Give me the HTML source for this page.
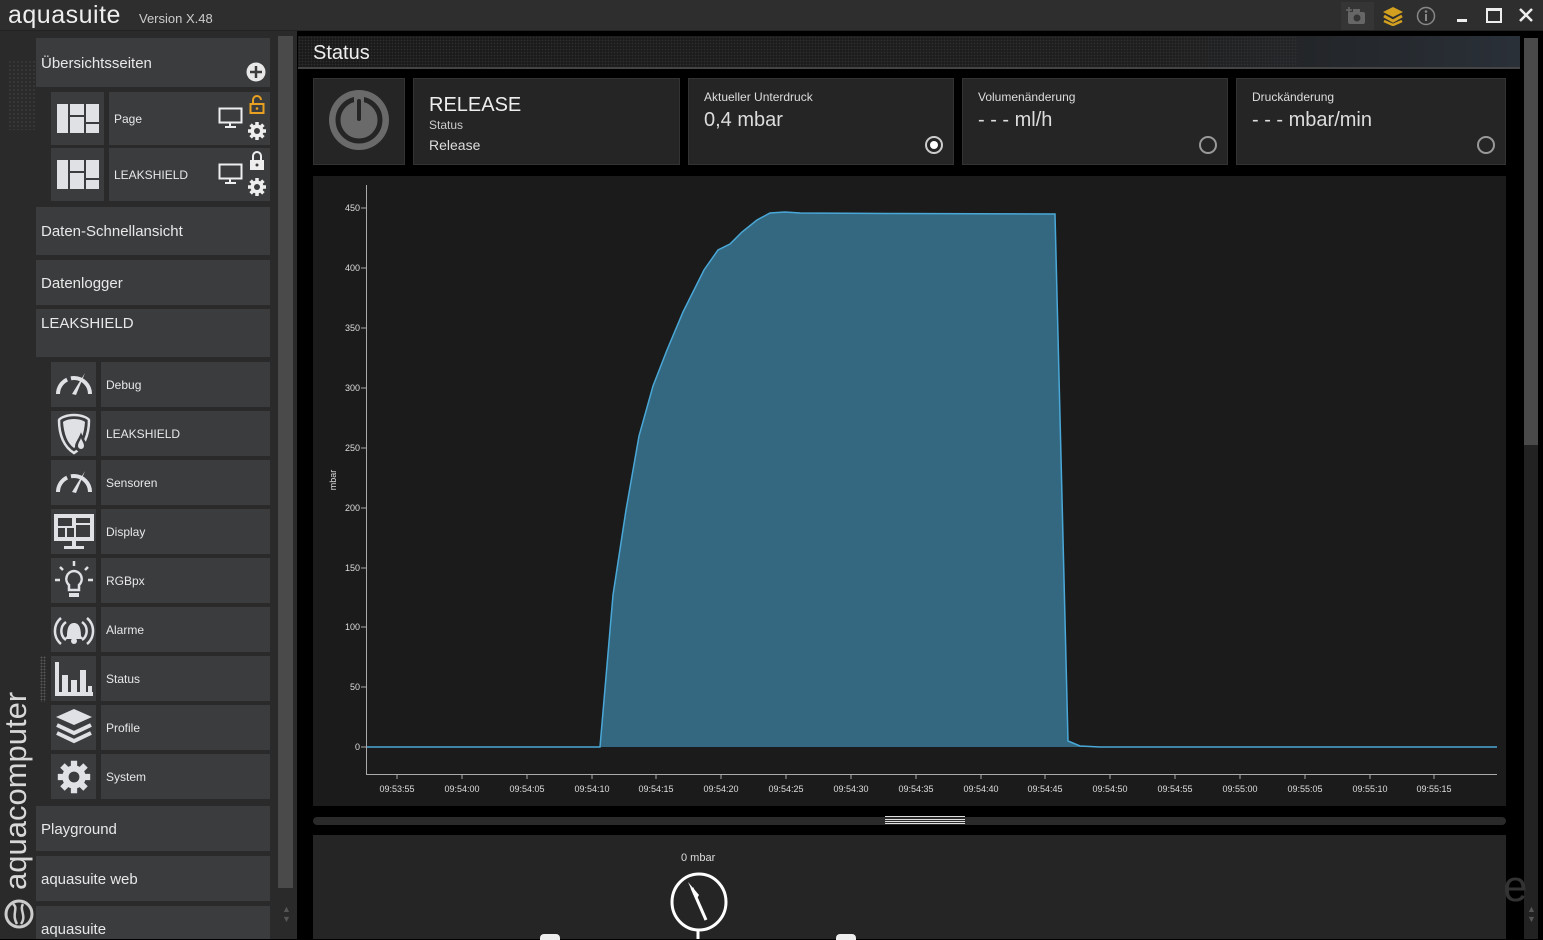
<!DOCTYPE html>
<html><head><meta charset="utf-8"><style>
*{margin:0;padding:0;box-sizing:border-box}
body{width:1543px;height:939px;overflow:hidden;background:#000;font-family:"Liberation Sans",sans-serif;color:#e6e6e6;position:relative}
.a{position:absolute}
.it{position:absolute;background:#3b3c3e}
.lbl{font-size:12px;color:#e8e8e8}
.big{font-size:15px;color:#e8e8e8}
.card{position:absolute;top:78px;height:87px;background:#252525;border:1px solid #333}
.dot{position:absolute;width:18px;height:18px;border-radius:50%;border:2px solid #999;}
</style></head><body>
<div class="a" style="left:0;top:0;width:1543px;height:31px;background:#2e2e2f;border-bottom:1px solid #222"></div>
<div class="a" style="left:8px;top:1px;font-size:25px;color:#eee;letter-spacing:0.5px">aquasuite</div>
<div class="a" style="left:139px;top:11px;font-size:13px;color:#ccc">Version X.48</div>
<div class="a" style="left:1341px;top:2px;width:33px;height:28px;background:#353535"></div>
<svg class="a" style="left:1346px;top:6px" width="22" height="20"><rect x="2" y="6" width="17" height="12" rx="2" fill="#666"/><circle cx="11" cy="12" r="3.5" fill="#353535"/><rect x="7" y="3" width="7" height="4" fill="#666"/><path d="M3 1v6M0 4h6" stroke="#666" stroke-width="1.5"/></svg>
<svg class="a" style="left:1382px;top:6px" width="22" height="20"><path d="M11 1L21 6L11 11L1 6Z" fill="#d4a020"/><path d="M2 10L11 15L20 10" stroke="#d4a020" stroke-width="3" fill="none"/><path d="M2 15L11 19L20 15" stroke="#d4a020" stroke-width="2.5" fill="none"/></svg>
<svg class="a" style="left:1416px;top:6px" width="20" height="20"><circle cx="10" cy="10" r="8.5" stroke="#888" stroke-width="1.5" fill="none"/><circle cx="10" cy="5.5" r="1.3" fill="#888"/><rect x="9" y="8" width="2" height="7" fill="#888"/></svg>
<div class="a" style="left:1457px;top:19px;width:10px;height:3px;background:#eee"></div>
<div class="a" style="left:1486px;top:8px;width:16px;height:15px;border:2px solid #eee;border-top-width:3px"></div>
<svg class="a" style="left:1518px;top:7px" width="16" height="16"><path d="M2 2L14 14M14 2L2 14" stroke="#eee" stroke-width="2.5"/></svg>
<div class="a" style="left:0;top:31px;width:297px;height:908px;background:#2a2a2b"></div>
<div class="a" style="left:278px;top:36px;width:15px;height:852px;background:#4a4a4b"></div>
<div class="a" style="left:282px;top:904px;font-size:9px;color:#555;line-height:10px">▲<br>▼</div>
<div class="it" style="left:36px;top:38px;width:234px;height:49px"></div>
<div class="a big" style="left:41px;top:55px">Übersichtsseiten</div>
<svg class="a" style="left:246px;top:62px" width="20" height="20"><circle cx="10" cy="10" r="9.5" fill="#e8e8e8"/><path d="M10 4v12M4 10h12" stroke="#3b3c3e" stroke-width="2.5"/></svg>
<div class="it" style="left:51px;top:92px;width:53px;height:53px"></div>
<div class="it" style="left:109px;top:92px;width:161px;height:53px"></div>
<div class="it" style="left:51px;top:148px;width:53px;height:53px"></div>
<div class="it" style="left:109px;top:148px;width:161px;height:53px"></div>
<svg class="a" style="left:57px;top:104px" width="42" height="30"><rect x="0" y="0" width="11" height="29" fill="#dfe1e5"/><rect x="13" y="0" width="14" height="11" fill="#dfe1e5"/><rect x="13" y="13" width="14" height="16" fill="#dfe1e5"/><rect x="29" y="0" width="13" height="18" fill="#dfe1e5"/><rect x="29" y="20" width="13" height="9" fill="#dfe1e5"/></svg>
<svg class="a" style="left:57px;top:160px" width="42" height="30"><rect x="0" y="0" width="11" height="29" fill="#dfe1e5"/><rect x="13" y="0" width="14" height="11" fill="#dfe1e5"/><rect x="13" y="13" width="14" height="16" fill="#dfe1e5"/><rect x="29" y="0" width="13" height="18" fill="#dfe1e5"/><rect x="29" y="20" width="13" height="9" fill="#dfe1e5"/></svg>
<div class="a lbl" style="left:114px;top:112px">Page</div>
<div class="a lbl" style="left:114px;top:168px">LEAKSHIELD</div>
<svg class="a" style="left:218px;top:107px" width="26" height="22"><rect x="1.5" y="1.5" width="22" height="14" fill="none" stroke="#eee" stroke-width="2"/><path d="M12 16v3M7 20h11" stroke="#eee" stroke-width="2"/></svg>
<svg class="a" style="left:218px;top:163px" width="26" height="22"><rect x="1.5" y="1.5" width="22" height="14" fill="none" stroke="#eee" stroke-width="2"/><path d="M12 16v3M7 20h11" stroke="#eee" stroke-width="2"/></svg>
<svg class="a" style="left:249px;top:95px" width="16" height="20"><path d="M4 9V5a4 4 0 0 1 8 0" stroke="#e8a020" stroke-width="2" fill="none"/><rect x="1.5" y="9" width="13" height="9" fill="none" stroke="#e8a020" stroke-width="2"/><circle cx="8" cy="13.5" r="1.3" fill="#e8a020"/></svg>
<svg class="a" style="left:249px;top:151px" width="16" height="20"><path d="M4 9V5a4 4 0 0 1 8 0v4" stroke="#eee" stroke-width="2" fill="none"/><rect x="1" y="9" width="14" height="10" fill="#eee"/><circle cx="8" cy="14" r="1.5" fill="#3b3c3e"/></svg>
<svg class="a" style="left:247px;top:121px" width="20" height="20" viewBox="0 0 20 20"><g fill="#eee"><circle cx="10" cy="10" r="6.5"/><g stroke="#eee" stroke-width="3.5"><path d="M10 1v18M1 10h18M3.6 3.6l12.8 12.8M16.4 3.6L3.6 16.4"/></g></g><circle cx="10" cy="10" r="3" fill="#3b3c3e"/></svg>
<svg class="a" style="left:247px;top:177px" width="20" height="20" viewBox="0 0 20 20"><g fill="#eee"><circle cx="10" cy="10" r="6.5"/><g stroke="#eee" stroke-width="3.5"><path d="M10 1v18M1 10h18M3.6 3.6l12.8 12.8M16.4 3.6L3.6 16.4"/></g></g><circle cx="10" cy="10" r="3" fill="#3b3c3e"/></svg>
<div class="it" style="left:36px;top:207px;width:234px;height:48px"></div>
<div class="a big" style="left:41px;top:223px">Daten-Schnellansicht</div>
<div class="it" style="left:36px;top:260px;width:234px;height:45px"></div>
<div class="a big" style="left:41px;top:275px">Datenlogger</div>
<div class="it" style="left:36px;top:309px;width:234px;height:48px"></div>
<div class="a big" style="left:41px;top:315px">LEAKSHIELD</div>
<div class="it" style="left:51px;top:362px;width:45px;height:45px"></div><div class="it" style="left:101px;top:362px;width:169px;height:45px"></div><div class="a lbl" style="left:106px;top:378px">Debug</div>
<div class="it" style="left:51px;top:411px;width:45px;height:45px"></div><div class="it" style="left:101px;top:411px;width:169px;height:45px"></div><div class="a lbl" style="left:106px;top:427px">LEAKSHIELD</div>
<div class="it" style="left:51px;top:460px;width:45px;height:45px"></div><div class="it" style="left:101px;top:460px;width:169px;height:45px"></div><div class="a lbl" style="left:106px;top:476px">Sensoren</div>
<div class="it" style="left:51px;top:509px;width:45px;height:45px"></div><div class="it" style="left:101px;top:509px;width:169px;height:45px"></div><div class="a lbl" style="left:106px;top:525px">Display</div>
<div class="it" style="left:51px;top:558px;width:45px;height:45px"></div><div class="it" style="left:101px;top:558px;width:169px;height:45px"></div><div class="a lbl" style="left:106px;top:574px">RGBpx</div>
<div class="it" style="left:51px;top:607px;width:45px;height:45px"></div><div class="it" style="left:101px;top:607px;width:169px;height:45px"></div><div class="a lbl" style="left:106px;top:623px">Alarme</div>
<div class="it" style="left:51px;top:656px;width:45px;height:45px"></div><div class="it" style="left:101px;top:656px;width:169px;height:45px"></div><div class="a lbl" style="left:106px;top:672px">Status</div>
<div class="it" style="left:51px;top:705px;width:45px;height:45px"></div><div class="it" style="left:101px;top:705px;width:169px;height:45px"></div><div class="a lbl" style="left:106px;top:721px">Profile</div>
<div class="it" style="left:51px;top:754px;width:45px;height:45px"></div><div class="it" style="left:101px;top:754px;width:169px;height:45px"></div><div class="a lbl" style="left:106px;top:770px">System</div>
<svg class="a" style="left:54px;top:370px" width="40" height="28"><path d="M4 24A16 16 0 0 1 36 24" stroke="#dfe1e5" stroke-width="4" fill="none" stroke-dasharray="18 4 40"/><path d="M18 24L31 3L22 25Z" fill="#dfe1e5"/></svg>
<svg class="a" style="left:54px;top:468px" width="40" height="28"><path d="M4 24A16 16 0 0 1 36 24" stroke="#dfe1e5" stroke-width="4" fill="none" stroke-dasharray="18 4 40"/><path d="M18 24L31 3L22 25Z" fill="#dfe1e5"/></svg>
<svg class="a" style="left:56px;top:413px" width="36" height="42"><path d="M18 2C10 2 4 5 3 7C3 22 8 34 18 40C28 34 33 22 33 7C32 5 26 2 18 2Z" fill="none" stroke="#dfe1e5" stroke-width="2.5"/><path d="M18 6C12 6 8 8 7 9C8 21 11 30 18 35C25 30 28 21 29 9C28 8 24 6 18 6Z" fill="#dfe1e5"/><path d="M25 22C23 27 20 30 20 33a5 5 0 0 0 10 0C30 30 27 27 25 22Z" fill="#3b3c3e" stroke="#3b3c3e" stroke-width="2"/><path d="M25 25C24 28 22 30 22 33a3 3 0 0 0 6 0C28 30 26 28 25 25Z" fill="#dfe1e5"/></svg>
<svg class="a" style="left:53px;top:513px" width="42" height="38"><rect x="1" y="1" width="40" height="27" fill="#dfe1e5"/><rect x="5" y="5" width="14" height="8" fill="#3b3c3e"/><rect x="5" y="15" width="7" height="9" fill="#3b3c3e"/><rect x="14" y="15" width="7" height="9" fill="#3b3c3e"/><rect x="23" y="5" width="14" height="5" fill="#3b3c3e"/><rect x="23" y="12" width="14" height="12" fill="#3b3c3e"/><rect x="19" y="28" width="4" height="5" fill="#dfe1e5"/><rect x="11" y="33" width="20" height="3" fill="#dfe1e5"/></svg>
<svg class="a" style="left:53px;top:560px" width="42" height="42"><g stroke="#dfe1e5" stroke-width="2.5"><path d="M21 1v5M2 20h5M35 20h5M7 7l3 3M35 7l-3 3"/></g><path d="M21 11a8 8 0 0 0-5 14v5h10v-5a8 8 0 0 0-5-14Z" fill="none" stroke="#dfe1e5" stroke-width="2.5"/><rect x="16" y="33" width="10" height="4" fill="#dfe1e5"/></svg>
<svg class="a" style="left:53px;top:612px" width="42" height="36"><path d="M14 24c0-8 2-13 7-13s7 5 7 13l3 3H11Z" fill="#dfe1e5"/><circle cx="21" cy="29" r="3" fill="#dfe1e5"/><g stroke="#dfe1e5" stroke-width="2.5" fill="none"><path d="M8 6A17 17 0 0 0 8 32M34 6A17 17 0 0 1 34 32M13 10A11 11 0 0 0 13 28M29 10A11 11 0 0 1 29 28"/></g></svg>
<svg class="a" style="left:54px;top:660px" width="40" height="38"><g fill="#dfe1e5"><rect x="1" y="2" width="4" height="34"/><rect x="1" y="32" width="38" height="4"/><rect x="8" y="15" width="6" height="18"/><rect x="17" y="20" width="6" height="13"/><rect x="26" y="10" width="6" height="23"/><rect x="34" y="26" width="4" height="7"/></g></svg>
<div class="a" style="left:40px;top:656px;width:6px;height:46px;background-image:radial-gradient(#555 0.8px,transparent 1px);background-size:3px 3px"></div>
<svg class="a" style="left:54px;top:707px" width="40" height="40"><path d="M20 2L38 10L20 18L2 10Z" fill="#dfe1e5"/><path d="M3 18L20 26L37 18M3 26L20 34L37 26" stroke="#dfe1e5" stroke-width="4" fill="none"/></svg>
<svg class="a" style="left:56px;top:759px" width="36" height="36" viewBox="0 0 20 20"><g fill="#dfe1e5"><circle cx="10" cy="10" r="6.5"/><g stroke="#dfe1e5" stroke-width="3.5"><path d="M10 1v18M1 10h18M3.6 3.6l12.8 12.8M16.4 3.6L3.6 16.4"/></g></g><circle cx="10" cy="10" r="3" fill="#3b3c3e"/></svg>
<div class="it" style="left:36px;top:806px;width:234px;height:45px"></div>
<div class="a big" style="left:41px;top:821px">Playground</div>
<div class="it" style="left:36px;top:856px;width:234px;height:45px"></div>
<div class="a big" style="left:41px;top:871px">aquasuite web</div>
<div class="it" style="left:36px;top:906px;width:234px;height:33px"></div>
<div class="a big" style="left:41px;top:921px">aquasuite</div>
<div class="a" style="left:-2px;top:890px;transform:rotate(-90deg);transform-origin:0 0;font-size:31px;color:#d8d8d8;white-space:nowrap">aquacomputer</div>
<svg class="a" style="left:3px;top:898px" width="32" height="32"><circle cx="16" cy="16" r="13" fill="none" stroke="#ccc" stroke-width="3"/><path d="M10 6c6 4-2 10 4 20M20 6c-4 6 4 12-2 20" stroke="#ccc" stroke-width="2.5" fill="none"/></svg>
<div class="a" style="left:8px;top:60px;width:28px;height:70px;background-image:radial-gradient(#3a3a3a 0.8px,transparent 1px);background-size:4px 4px"></div>
<div class="a" style="left:298px;top:36px;width:1222px;height:33px;background:linear-gradient(90deg,#1a1a1a 0%,#1e1e1e 70%,#2a3038 100%);border-bottom:2px solid #444"></div>
<div class="a" style="left:298px;top:36px;width:1000px;height:31px;background-image:radial-gradient(#333 0.7px,transparent 0.9px);background-size:3px 3px;opacity:.8"></div>
<div class="a" style="left:313px;top:42px;font-size:20px;color:#eee">Status</div>
<div class="a" style="left:1524px;top:38px;width:14px;height:407px;background:#4a4a4b"></div>
<div class="a" style="left:1524px;top:445px;width:14px;height:494px;background:#222"></div>
<div class="a" style="left:1527px;top:904px;font-size:9px;color:#555;line-height:10px">▲<br>▼</div>
<div class="card" style="left:313px;width:92px"></div>
<svg class="a" style="left:328px;top:89px" width="62" height="62"><circle cx="31" cy="31" r="30" fill="#6a6a6a"/><circle cx="31" cy="31" r="21" fill="none" stroke="#252525" stroke-width="5"/><rect x="26" y="6" width="10" height="24" fill="#6a6a6a"/><rect x="29" y="10" width="4" height="22" rx="2" fill="#252525"/></svg>
<div class="card" style="left:413px;width:267px"></div>
<div class="a" style="left:429px;top:94px;font-size:20px;color:#eee">RELEASE</div>
<div class="a" style="left:429px;top:118px;font-size:12px;color:#ccc">Status</div>
<div class="a" style="left:429px;top:137px;font-size:14px;color:#ddd">Release</div>
<div class="card" style="left:688px;width:266px"></div>
<div class="a" style="left:704px;top:90px;font-size:12px;color:#ddd">Aktueller Unterdruck</div>
<div class="a" style="left:704px;top:109px;font-size:20px;color:#ddd">0,4 mbar</div>
<div class="dot" style="left:925px;top:136px;border-color:#ccc"><div style="position:absolute;left:3px;top:3px;width:8px;height:8px;border-radius:50%;background:#fff"></div></div>
<div class="card" style="left:962px;width:266px"></div>
<div class="a" style="left:978px;top:90px;font-size:12px;color:#ddd">Volumenänderung</div>
<div class="a" style="left:978px;top:109px;font-size:20px;color:#ddd">- - - ml/h</div>
<div class="dot" style="left:1199px;top:136px"></div>
<div class="card" style="left:1236px;width:270px"></div>
<div class="a" style="left:1252px;top:90px;font-size:12px;color:#ddd">Druckänderung</div>
<div class="a" style="left:1252px;top:109px;font-size:20px;color:#ddd">- - - mbar/min</div>
<div class="dot" style="left:1477px;top:136px"></div>
<div class="a" style="left:313px;top:176px;width:1193px;height:630px;background:#1b1b1b"></div>
<svg class="a" style="left:0;top:0" width="1543" height="939" font-family="Liberation Sans, sans-serif" font-size="9" fill="#ddd">
<path d="M366 747L600 747L613 595L626 510L639 436L653 386L667 350L683 312L704 270L718 250L730 244L742 232L757 220L770 213L785 212L800 213L900 213.5L1055 214L1068 741L1080 746L1100 747L1497 747Z" fill="#336880"/>
<path d="M366 747L600 747L613 595L626 510L639 436L653 386L667 350L683 312L704 270L718 250L730 244L742 232L757 220L770 213L785 212L800 213L900 213.5L1055 214L1068 741L1080 746L1100 747L1497 747" fill="none" stroke="#4aa8d8" stroke-width="1.5"/>
<path d="M366.5 185V774.5H1497" stroke="#aaa" fill="none"/>
<g stroke="#aaa"><path d="M361 208h5M361 268h5M361 328h5M361 388h5M361 448h5M361 508h5M361 568h5M361 627h5M361 687h5M361 747h5"/>
<path d="M397 774v5M462 774v5M527 774v5M592 774v5M656 774v5M721 774v5M786 774v5M851 774v5M916 774v5M981 774v5M1045 774v5M1110 774v5M1175 774v5M1240 774v5M1305 774v5M1370 774v5M1434 774v5"/></g>
<g text-anchor="end"><text x="360" y="211">450</text><text x="360" y="271">400</text><text x="360" y="331">350</text><text x="360" y="391">300</text><text x="360" y="451">250</text><text x="360" y="511">200</text><text x="360" y="571">150</text><text x="360" y="630">100</text><text x="360" y="690">50</text><text x="360" y="750">0</text></g>
<g text-anchor="middle"><text x="397" y="792">09:53:55</text><text x="462" y="792">09:54:00</text><text x="527" y="792">09:54:05</text><text x="592" y="792">09:54:10</text><text x="656" y="792">09:54:15</text><text x="721" y="792">09:54:20</text><text x="786" y="792">09:54:25</text><text x="851" y="792">09:54:30</text><text x="916" y="792">09:54:35</text><text x="981" y="792">09:54:40</text><text x="1045" y="792">09:54:45</text><text x="1110" y="792">09:54:50</text><text x="1175" y="792">09:54:55</text><text x="1240" y="792">09:55:00</text><text x="1305" y="792">09:55:05</text><text x="1370" y="792">09:55:10</text><text x="1434" y="792">09:55:15</text></g>
<text x="336" y="480" transform="rotate(-90 336 480)" text-anchor="middle">mbar</text>
</svg>
<div class="a" style="left:313px;top:817px;width:1193px;height:8px;border-radius:4px;background:#2a2a2a"></div>
<div class="a" style="left:885px;top:816px;width:80px;height:8px;border-top:1px solid #ddd;border-bottom:1px solid #ddd;background:linear-gradient(#2a2a2a 0 2px,#ddd 2px 3px,#2a2a2a 3px 4px,#ddd 4px 5px,#2a2a2a 5px)"></div>
<div class="a" style="left:313px;top:835px;width:1193px;height:104px;background:#252525"></div>
<div class="a" style="left:681px;top:852px;font-size:11px;color:#ddd">0 mbar</div>
<svg class="a" style="left:660px;top:870px" width="80" height="69"><ellipse cx="39" cy="32" rx="27" ry="28" fill="none" stroke="#fff" stroke-width="3"/><path d="M32 18L46 50" stroke="#fff" stroke-width="3"/><path d="M28 12L36 30L39 25Z" fill="#fff"/><path d="M38 60v9" stroke="#fff" stroke-width="3"/></svg>
<div class="a" style="left:540px;top:934px;width:20px;height:6px;border-radius:4px 4px 0 0;background:#eee"></div>
<div class="a" style="left:836px;top:934px;width:20px;height:6px;border-radius:4px 4px 0 0;background:#eee"></div>
<div class="a" style="left:1503px;top:862px;font-size:44px;color:#333">e</div>
</body></html>
